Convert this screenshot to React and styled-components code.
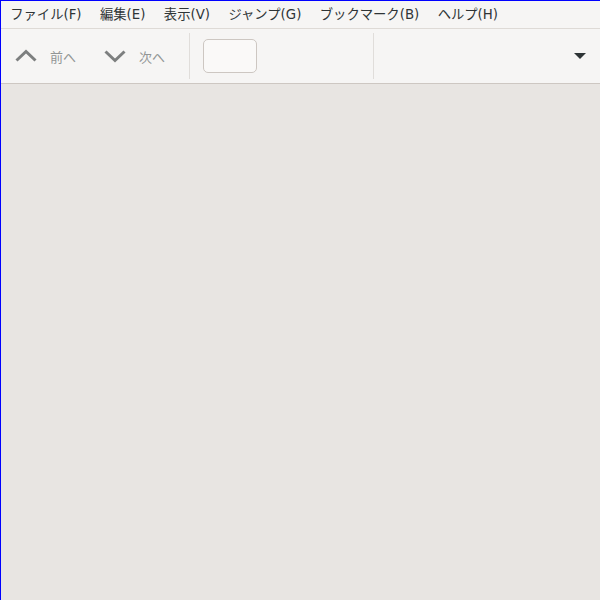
import React from 'react';
import styled, { createGlobalStyle } from 'styled-components';

const GlobalStyle = createGlobalStyle`
html, body {
  margin: 0;
  padding: 0;
  background: #e8e5e2;
}
body {
  font-family: 'DejaVu Sans', 'Noto Sans CJK JP', sans-serif;
}
`;

const Window = styled.div`
width: 600px;
height: 600px;
box-sizing: border-box;
border-top: 1px solid #0000ff;
border-left: 1px solid #0000ff;
display: flex;
flex-direction: column;
background: #e8e5e2;
overflow: hidden;
`;

const MenuBar = styled.div`
height: 27px;
display: flex;
align-items: center;
background: #f6f5f4;
border-bottom: 1px solid #dedad6;
`;

const MenuItem = styled.span`
padding: 0 9.2px;
font-size: 13.33px;
color: #2e3436;
line-height: 27px;
white-space: nowrap;
`;

const Toolbar = styled.div`
height: 54px;
display: flex;
align-items: center;
padding: 0 14px 0 13px;
background: #f6f5f4;
border-bottom: 1px solid #cdc7c2;
`;

const NavButton = styled.div`
display: flex;
align-items: center;
gap: 12px;
margin-right: ${p => p.$mr}px;
`;

const Label = styled.span`
font-family: 'Noto Sans CJK JP', sans-serif;
font-size: 13px;
color: #929595;
`;

const Separator = styled.div`
width: 1px;
height: 46px;
background: #e0ddda;
margin-right: ${p => p.$mr}px;
`;

const PageEntry = styled.div`
width: 52px;
height: 32px;
border: 1px solid #cdc7c2;
border-radius: 5px;
background: #faf9f8;
margin-right: 116px;
`;

const Spacer = styled.div`
flex: 1;
`;

const Content = styled.div`
flex: 1;
background: #e8e5e2;
`;

const Chevron = ({ down }) => (
  <svg width="24" height="24" viewBox="0 0 24 24">
    <path
      d={down ? 'M2.5 7.5 L12 16.5 L21.5 7.5' : 'M2.5 16.5 L12 7.5 L21.5 16.5'}
      fill="none"
      stroke="#7d7f7f"
      strokeWidth="3"
    />
  </svg>
);

const Caret = () => (
  <svg width="12" height="8" viewBox="0 0 12 8">
    <path d="M0 1 L12 1 L6 7 Z" fill="#2e3436" />
  </svg>
);

const menus = ['ファイル(F)', '編集(E)', '表示(V)', 'ジャンプ(G)', 'ブックマーク(B)', 'ヘルプ(H)'];

export default function App() {
  return (
    <>
      <GlobalStyle />
      <Window>
        <MenuBar>
          {menus.map(m => (
            <MenuItem key={m}>{m}</MenuItem>
          ))}
        </MenuBar>
        <Toolbar>
          <NavButton $mr={27}>
            <Chevron />
            <Label>前へ</Label>
          </NavButton>
          <NavButton $mr={24}>
            <Chevron down />
            <Label>次へ</Label>
          </NavButton>
          <Separator $mr={13} />
          <PageEntry />
          <Separator $mr={0} />
          <Spacer />
          <Caret />
        </Toolbar>
        <Content />
      </Window>
    </>
  );
}
